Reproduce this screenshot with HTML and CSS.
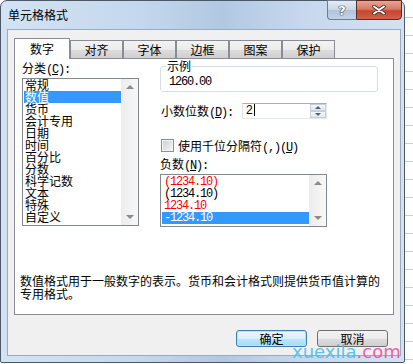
FILE: index.html
```html
<!DOCTYPE html>
<html lang="zh-CN">
<head>
    <meta charset="UTF-8">
    <title>单元格格式</title>
    <link rel="stylesheet" href="styles.css">
</head>
<body>
    <div class="window">
        <div class="titlebar">
            <span class="title">单元格格式</span>
            <div class="caption">
                <span class="cap-btn help">?</span>
                <span class="cap-btn close">
                    <svg width="16" height="10" viewBox="0 0 16 10">
                        <path d="M3 1.5 L13 8.5 M13 1.5 L3 8.5" stroke="#3b2f2f" stroke-width="3.6" stroke-linecap="round"/>
                        <path d="M3 1.5 L13 8.5 M13 1.5 L3 8.5" stroke="#fff" stroke-width="2" stroke-linecap="round"/>
                    </svg>
                </span>
            </div>
        </div>

        <div class="client">
            <div class="tabs">
                <div class="tab active">数字</div>
                <div class="tab">对齐</div>
                <div class="tab">字体</div>
                <div class="tab">边框</div>
                <div class="tab">图案</div>
                <div class="tab">保护</div>
            </div>

            <div class="panel">
                <div class="panel-main">
                    <div class="col-left">
                        <div class="label">分类<span class="mono">(<u>C</u>):</span></div>
                        <div class="listbox cat-list">
                            <div class="items">
                                <div class="item">常规</div>
                                <div class="item selected">数值</div>
                                <div class="item">货币</div>
                                <div class="item">会计专用</div>
                                <div class="item">日期</div>
                                <div class="item">时间</div>
                                <div class="item">百分比</div>
                                <div class="item">分数</div>
                                <div class="item">科学记数</div>
                                <div class="item">文本</div>
                                <div class="item">特殊</div>
                                <div class="item">自定义</div>
                            </div>
                            <div class="scrollbar">
                                <span class="arrow up"></span>
                                <span class="arrow down"></span>
                            </div>
                        </div>
                    </div>

                    <div class="col-right">
                        <fieldset class="sample">
                            <legend>示例</legend>
                            <div class="sample-value mono">1260.00</div>
                        </fieldset>

                        <div class="decimals">
                            <span class="decimals-label">小数位数<span class="mono">(<u>D</u>):</span></span>
                            <div class="spin">
                                <span class="spin-value">2</span>
                                <div class="spin-btns">
                                    <span class="spin-btn"><span class="spin-arrow up"></span></span>
                                    <span class="spin-btn"><span class="spin-arrow down"></span></span>
                                </div>
                            </div>
                        </div>

                        <div class="check-row">
                            <span class="checkbox"></span>
                            <span>使用千位分隔符<span class="mono">(,)(<u>U</u>)</span></span>
                        </div>

                        <div class="label">负数<span class="mono">(<u>N</u>):</span></div>
                        <div class="listbox neg-list">
                            <div class="items">
                                <div class="item mono red">(1234.10)</div>
                                <div class="item mono">(1234.10)</div>
                                <div class="item mono red">1234.10</div>
                                <div class="item mono selected">-1234.10</div>
                            </div>
                            <div class="scrollbar">
                                <span class="arrow up"></span>
                                <span class="arrow down"></span>
                            </div>
                        </div>
                    </div>
                </div>

                <p class="desc">数值格式用于一般数字的表示。货币和会计格式则提供货币值计算的专用格式。</p>
            </div>

            <div class="buttons">
                <button class="btn default">确定</button>
                <button class="btn">取消</button>
            </div>
        </div>
    </div>

    <div class="watermark"><span class="wm-blue">xuexila</span><span class="wm-pink">.com</span></div>
</body>
</html>
```

FILE: styles.css
```css
* {
    box-sizing: border-box;
}
body {
    margin: 0;
    width: 413px;
    height: 364px;
    overflow: hidden;
    position: relative;
    font-family: "Noto Sans CJK SC", sans-serif;
    font-size: 12px;
    color: #000;
    background: repeating-linear-gradient(#ffffff 0, #ffffff 17px, #c9d0dc 17px, #c9d0dc 18px);
}
.mono {
    font-family: "Liberation Mono", monospace;
    letter-spacing: -1.2px;
}
u {
    text-decoration-thickness: 1px;
}

/* window frame */
.window {
    width: 405px;
    height: 363px;
    border: 1px solid #4d5867;
    border-radius: 7px 7px 2px 2px;
    background: linear-gradient(to right, #d4e3f3, #c4d7ec 35%, #b2c8e2 55%, #c7d8ed 75%, #d3e2f2);
    display: flex;
    flex-direction: column;
}
.titlebar {
    height: 28px;
    display: flex;
    justify-content: space-between;
    align-items: flex-start;
}
.title {
    padding: 7px 0 0 7px;
    line-height: 14px;
}
.caption {
    display: flex;
    margin: -1px 2px 0 0;
}
.cap-btn {
    height: 20px;
    display: flex;
    align-items: center;
    justify-content: center;
}
.help {
    width: 29px;
    border: 1px solid #6d7d93;
    border-right: none;
    border-radius: 0 0 0 4px;
    background: linear-gradient(#e4ecf5, #c9d6e5 50%, #b2c4d9 51%, #c3d3e6);
    color: #fff;
    font-family: "DejaVu Sans", sans-serif;
    font-weight: bold;
    font-size: 13px;
    text-shadow: 0 0 1px #333, 0 0 1px #333, 0 0 1px #333;
}
.close {
    width: 46px;
    border: 1px solid #5d2a22;
    border-radius: 0 0 4px 0;
    background: linear-gradient(#e7a597, #d77a66 45%, #c7452f 55%, #d0614a);
}

/* client area */
.client {
    margin: 0 3px 0 6px;
    height: 327px;
    border: 1px solid #9aaabf;
    background: #f0f0f0;
    padding: 8px 6px 0 6px;
}
.tabs {
    display: flex;
    align-items: flex-end;
    height: 20px;
}
.tab {
    width: 53px;
    height: 18px;
    border: 1px solid #898c95;
    border-bottom: none;
    background: linear-gradient(#f3f3f3, #ebebeb 50%, #dddddd 51%, #cfcfcf);
    text-align: center;
    line-height: 17px;
}
.tab.active {
    width: 56px;
    height: 21px;
    margin-bottom: -1px;
    background: #fff;
    position: relative;
    z-index: 1;
    line-height: 19px;
}
.panel {
    height: 257px;
    border: 1px solid #898c95;
    background: #fff;
}
.panel-main {
    display: flex;
    height: 165px;
    padding: 2px 0 0 7px;
}
.label {
    line-height: 14px;
}
.col-left {
    width: 117px;
}
.col-right {
    width: 218px;
    margin-left: 21px;
    margin-top: -1px;
}

/* list boxes */
.listbox {
    display: flex;
    border: 1px solid #828790;
    background: #fff;
}
.cat-list {
    margin-top: 1px;
    height: 148px;
}
.neg-list {
    margin-top: 1px;
    width: 167px;
    height: 53px;
}
.items {
    flex: 1;
    padding: 0 0 0 1px;
}
.item {
    height: 12px;
    line-height: 12px;
    padding-left: 1px;
    white-space: nowrap;
}
.item.selected {
    background: #3399ff;
    color: #fff;
}
.neg-list .items {
    padding-top: 1px;
}
.neg-list .item {
    padding-left: 2px;
}
.red {
    color: #ff0000;
}
.scrollbar {
    width: 17px;
    background: linear-gradient(to right, #ececec, #f8f8f8);
    display: flex;
    flex-direction: column;
    justify-content: space-between;
    align-items: center;
    padding: 6px 0 6px;
}
.arrow {
    width: 0;
    height: 0;
    border-left: 4px solid transparent;
    border-right: 4px solid transparent;
}
.arrow.up {
    border-bottom: 4px solid #8a8a8a;
}
.arrow.down {
    border-top: 4px solid #8a8a8a;
}

/* sample */
.sample {
    margin: 0;
    padding: 0 8px 2px;
    border: 1px solid #d5dfe5;
    border-radius: 3px;
}
.sample legend {
    padding: 0 1px;
    margin-left: -3px;
    line-height: 12px;
}
.sample-value {
    margin-top: 3px;
    line-height: 14px;
}

/* decimals spin */
.decimals {
    display: flex;
    align-items: center;
    height: 16px;
    margin-top: 11px;
}
.decimals-label {
    width: 82px;
    padding-left: 1px;
}
.spin {
    width: 85px;
    height: 16px;
    border: 1px solid #abadb3;
    border-color: #abadb3 #e3e9ef #e3e9ef #e2e3ea;
    background: #fff;
    display: flex;
    justify-content: space-between;
}
.spin-value {
    font-family: "Liberation Sans", sans-serif;
    font-size: 12px;
    line-height: 13px;
    padding-left: 3px;
}
.spin-value::after {
    content: "";
    display: inline-block;
    width: 1px;
    height: 12px;
    margin-left: 1px;
    background: #000;
    vertical-align: top;
}
.spin-btns {
    width: 16px;
    display: flex;
    flex-direction: column;
}
.spin-btn {
    flex: 1;
    border: 1px solid #c9ced6;
    background: linear-gradient(#f6f7f9, #e3e6ea);
    display: flex;
    align-items: center;
    justify-content: center;
}
.spin-arrow {
    width: 0;
    height: 0;
    border-left: 3px solid transparent;
    border-right: 3px solid transparent;
}
.spin-arrow.up {
    border-bottom: 3px solid #4d6185;
}
.spin-arrow.down {
    border-top: 3px solid #4d6185;
}

/* checkbox */
.check-row {
    display: flex;
    align-items: center;
    height: 13px;
    margin-top: 20px;
    margin-bottom: 5px;
}
.checkbox {
    width: 13px;
    height: 13px;
    margin: 0 4px 0 1px;
    border: 1px solid #8e8f8f;
    background: linear-gradient(135deg, #cbcfd5, #f6f6f6);
    box-shadow: inset 0 0 0 1px #f4f4f4;
}

/* description */
.desc {
    margin: 50px 0 0 5px;
    width: 362px;
    line-height: 13px;
}

/* buttons */
.buttons {
    display: flex;
    justify-content: flex-end;
    gap: 10px;
    margin: 15px 6px 0 0;
}
.btn {
    width: 71px;
    height: 17px;
    padding: 0;
    font-family: inherit;
    font-size: 12px;
    line-height: 15px;
    color: #000;
    border: 1px solid #707070;
    border-radius: 3px;
    background: linear-gradient(#f2f2f2, #ebebeb 50%, #dddddd 51%, #cfcfcf);
}
.btn.default {
    border-color: #3c7fb1;
    box-shadow: inset 0 0 0 1px #b5e2fa;
    background: linear-gradient(#eaf6fd, #d9f0fc 50%, #bee6fd 51%, #a7d9f5);
}

/* watermark lies over the frame */
.watermark {
    position: absolute;
    left: 292px;
    top: 342px;
    font-family: "DejaVu Sans", sans-serif;
    font-size: 18px;
    line-height: 20px;
    opacity: 0.9;
}
.wm-blue {
    color: #4dbfee;
}
.wm-pink {
    color: #f0509e;
}
```
